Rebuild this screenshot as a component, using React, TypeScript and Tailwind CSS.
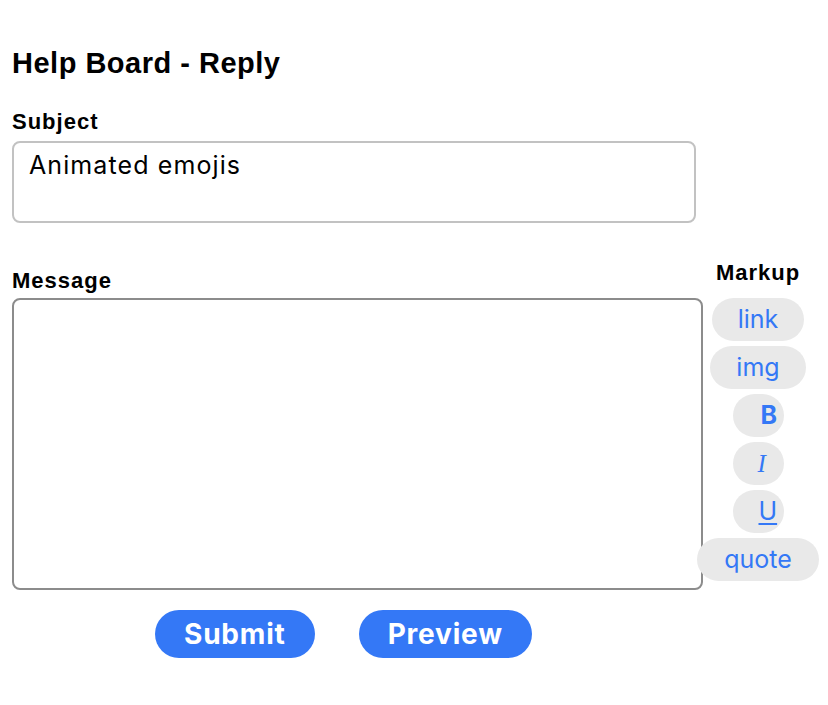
export default function App() {
  const label =
    "font-['Liberation_Sans',Arial,sans-serif] font-bold text-[22px] leading-[24px] tracking-[1px] text-black";
  const pill =
    "h-[43px] shrink-0 rounded-full bg-[#e9e9e9] text-[#3478f6] text-[25px] leading-[43px] whitespace-nowrap font-['Inter',sans-serif]";
  const action =
    "h-[48px] rounded-full bg-[#3478f6] px-[29px] text-[28px] tracking-[0.8px] font-bold text-white font-['Inter',sans-serif]";

  return (
    <div className="min-h-screen bg-white pl-[12px] pt-[47px] font-['Inter',sans-serif]">
      {/* Title */}
      <h1 className="font-['Liberation_Sans',Arial,sans-serif] font-bold text-[29px] leading-[33px] tracking-[0.5px] text-black">
        Help Board - Reply
      </h1>

      {/* Subject */}
      <div className={`${label} mt-[30px]`}>Subject</div>
      <textarea
        readOnly
        defaultValue="Animated emojis"
        className="mt-[7px] block w-[684px] h-[82px] resize-none rounded-[8px] border-2 border-[#c2c2c2] px-[15px] pt-[7px] text-[25px] leading-[30px] tracking-[1.1px] text-black outline-none font-['Inter',sans-serif]"
      />

      {/* Message + markup */}
      <div className="mt-[38px] flex items-start gap-[5px]">
        <div className="pt-[8px]">
          <div className={label}>Message</div>
          <textarea
            readOnly
            className="mt-[5px] block w-[691px] h-[292px] resize-none rounded-[8px] border-2 border-[#8c8c8c] outline-none"
          />
        </div>

        <div className="w-[100px] flex flex-col items-center">
          <div className={`${label} text-center`}>Markup</div>
          <div className="mt-[13px] flex flex-col items-center gap-[5px]">
            <button className={`${pill} px-[26px]`}>link</button>
            <button className={`${pill} px-[26px]`}>img</button>
            <button className={`${pill} w-[51px] pl-[28px] text-left font-bold`}>B</button>
            <button className={`${pill} w-[51px] pl-[25px] text-left italic font-['Liberation_Serif',serif]`}>I</button>
            <button className={`${pill} w-[51px] pl-[26px] text-left underline underline-offset-[3px]`}>U</button>
            <button className={`${pill} px-[27px]`}>quote</button>
          </div>
        </div>
      </div>

      {/* Actions */}
      <div className="mt-[20px] flex gap-[44px] pl-[143px]">
        <button className={action}>Submit</button>
        <button className={action}>Preview</button>
      </div>
    </div>
  );
}
